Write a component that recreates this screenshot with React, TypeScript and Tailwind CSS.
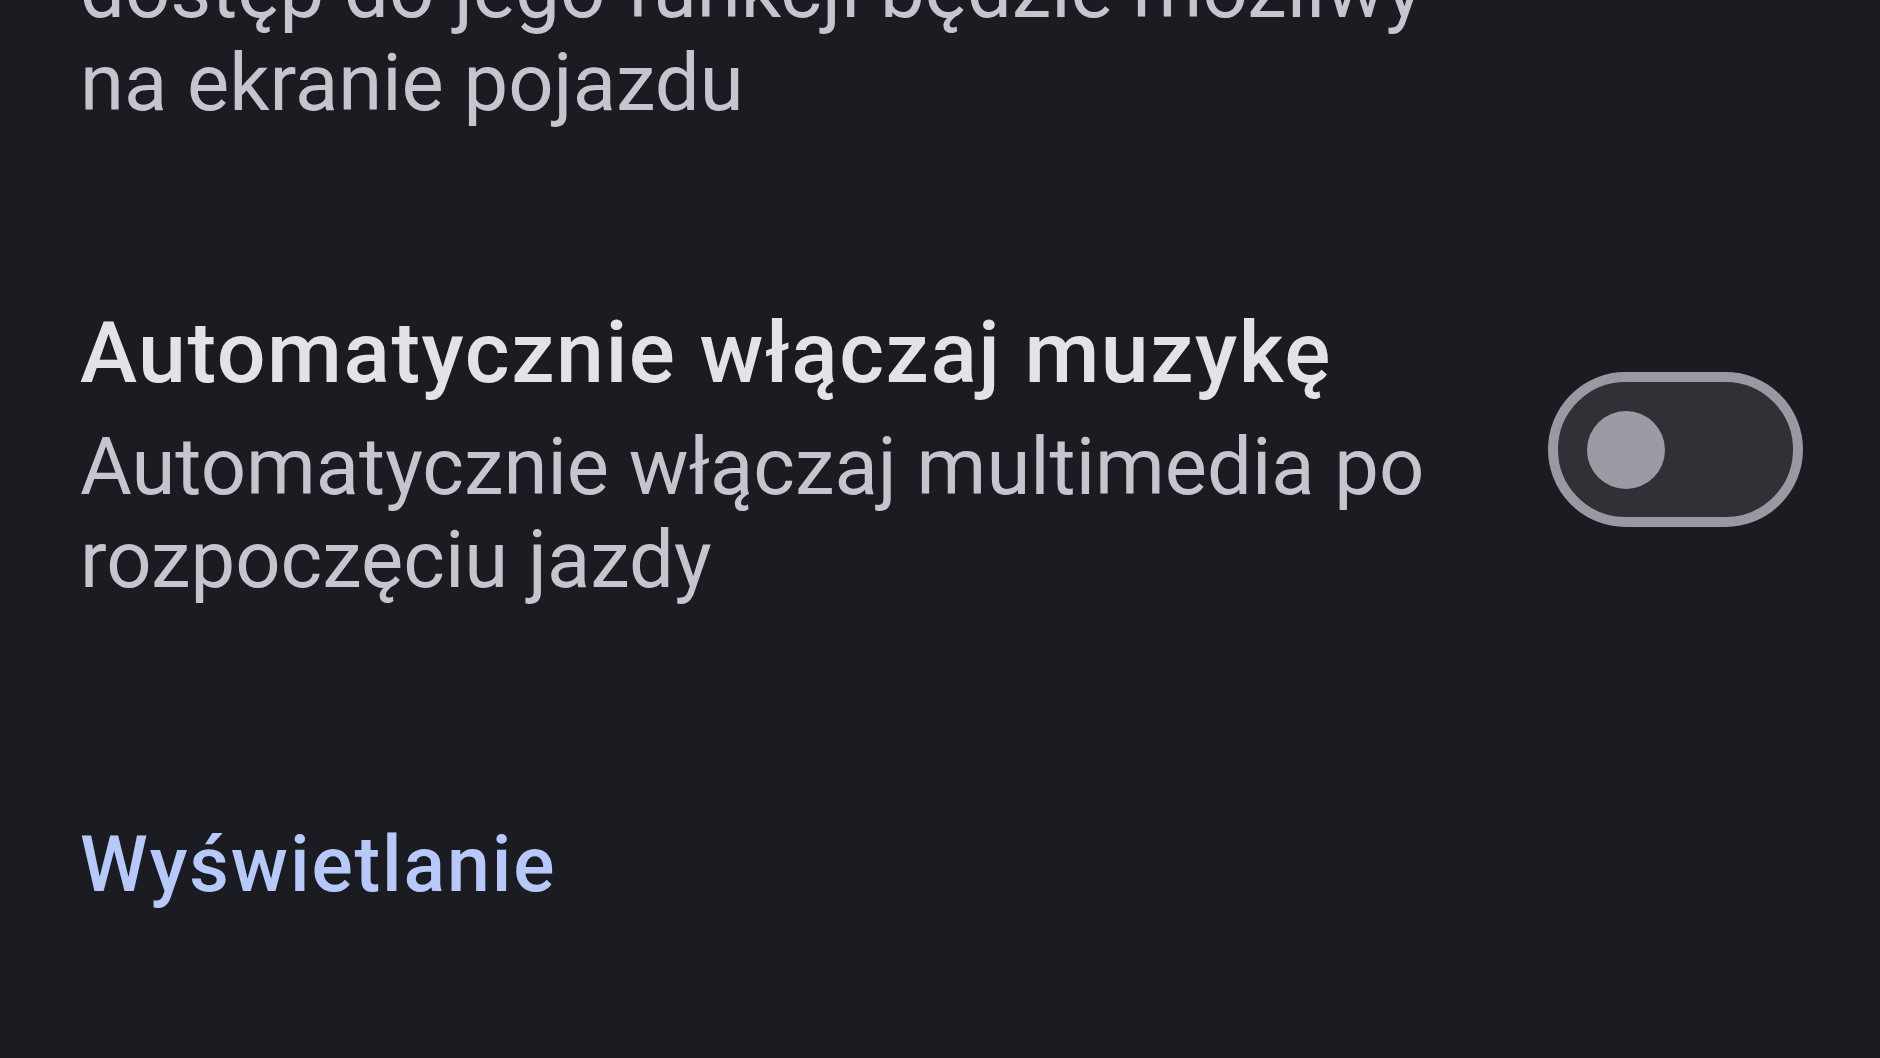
export default function App() {
  return (
    <div
      className="w-[1880px] h-[1058px] overflow-hidden bg-[#1b1c21] pl-[80px] pr-[77px]"
      style={{ fontFamily: "Roboto, 'Noto Sans', sans-serif" }}
    >
      <div className="-mt-[57px] text-[79.6px] leading-[93px] text-[#c6c5cf] whitespace-nowrap">
        dostęp do jego funkcji będzie możliwy
        <br />
        na ekranie pojazdu
      </div>

      <div className="mt-[174px] flex items-center justify-between">
        <div className="flex flex-col">
          <div className="text-[86px] leading-[100px] font-medium tracking-[1.55px] text-[#e3e2e8] whitespace-nowrap">
            Automatycznie włączaj muzykę
          </div>
          <div className="mt-[17px] text-[79.6px] leading-[93px] text-[#c6c5cf] whitespace-nowrap">
            Automatycznie włączaj multimedia po
            <br />
            rozpoczęciu jazdy
          </div>
        </div>
        <div className="-mt-[10px] w-[255px] h-[155px] rounded-full border-[10px] border-[#9a99a3] bg-[#303036] flex items-center pl-[29px] shrink-0">
          <div className="w-[78px] h-[78px] rounded-full bg-[#9c9ba5]" />
        </div>
      </div>

      <div className="mt-[214px] text-[77px] leading-[90px] font-medium tracking-[1.9px] text-[#b7c8fb] whitespace-nowrap">
        Wyświetlanie
      </div>
    </div>
  );
}
